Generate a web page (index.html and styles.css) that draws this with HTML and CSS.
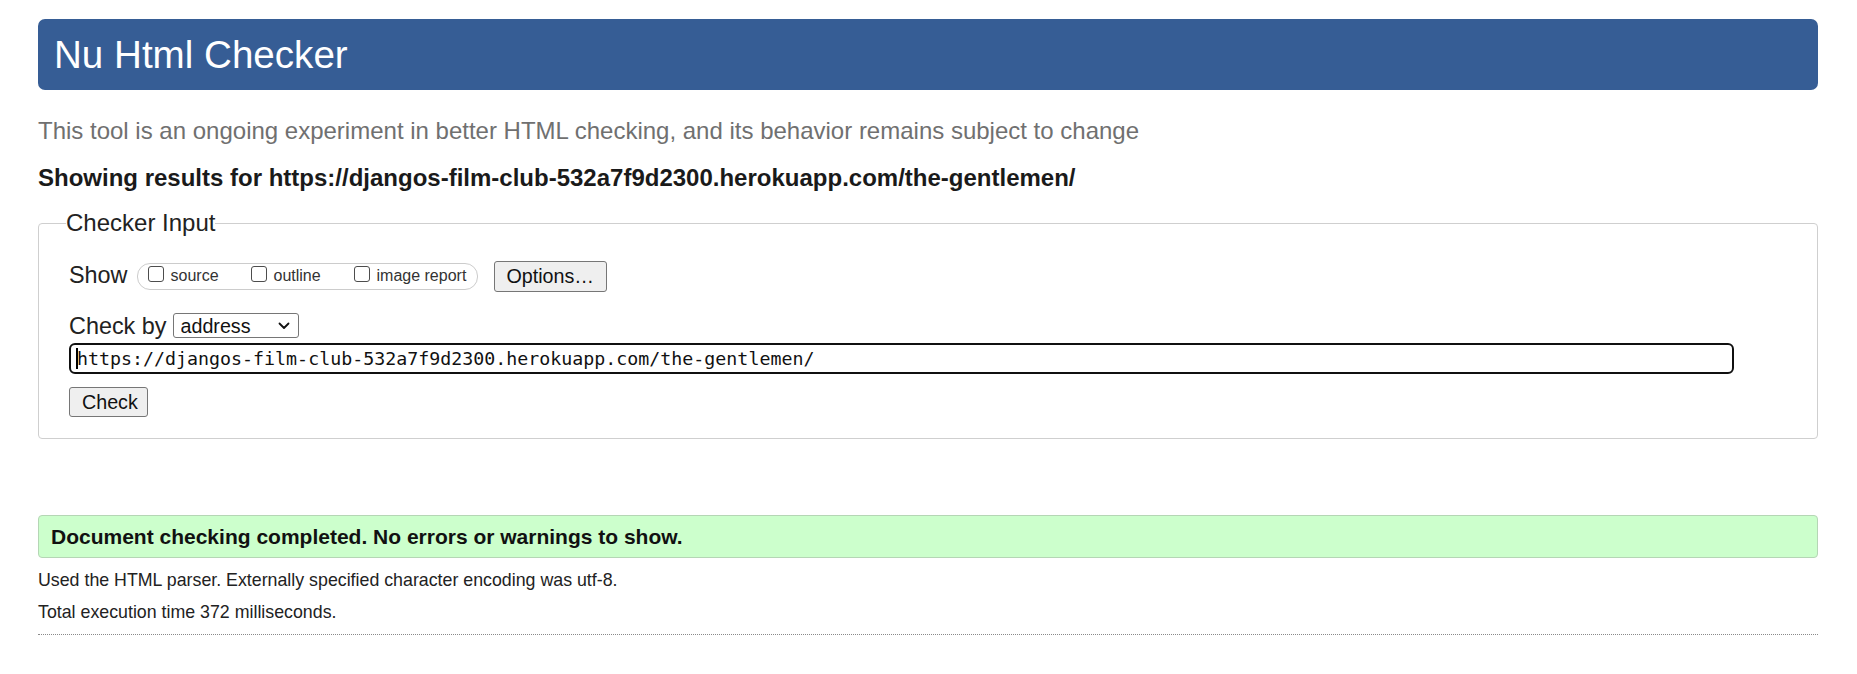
FILE: index.html
```html
<!DOCTYPE html>
<html lang="en">
<head>
<meta charset="utf-8">
<title>Showing results for https://djangos-film-club-532a7f9d2300.herokuapp.com/the-gentlemen/ - Nu Html Checker</title>
<link rel="stylesheet" href="styles.css">
</head>
<body>
<div class="page">
  <h1 class="title">Nu Html Checker</h1>
  <p class="intro">This tool is an ongoing experiment in better HTML checking, and its behavior remains subject to change</p>
  <p class="showing">Showing results for https://djangos-film-club-532a7f9d2300.herokuapp.com/the-gentlemen/</p>

  <form class="checker-form">
    <fieldset class="checker">
      <legend class="checker-legend">Checker Input</legend>
      <div class="row show-row">
        <span class="row-label">Show</span>
        <span class="show-group">
          <label class="opt"><input type="checkbox" class="cb"><span>source</span></label>
          <label class="opt"><input type="checkbox" class="cb"><span>outline</span></label>
          <label class="opt"><input type="checkbox" class="cb"><span>image report</span></label>
        </span>
        <button type="button" class="btn options-btn">Options…</button>
      </div>
      <div class="row by-row">
        <span class="row-label">Check by</span>
        <span class="select-wrap">
          <select class="by-select">
            <option>address</option>
            <option>file upload</option>
            <option>text input</option>
          </select>
          <svg class="chev" width="12" height="8" viewBox="0 0 12 8" aria-hidden="true"><path d="M1.5 1.5 L6 6 L10.5 1.5" fill="none" stroke="#111" stroke-width="1.8" stroke-linecap="round" stroke-linejoin="round"/></svg>
        </span>
      </div>
      <div class="url-wrap">
        <input class="url" type="url" value="https://djangos-film-club-532a7f9d2300.herokuapp.com/the-gentlemen/">
        <span class="caret"></span>
      </div>
      <div class="row submit-row">
        <button type="button" class="btn check-btn">Check</button>
      </div>
    </fieldset>
  </form>

  <div class="success">Document checking completed. No errors or warnings to show.</div>
  <p class="details">Used the HTML parser. Externally specified character encoding was utf-8.</p>
  <p class="details">Total execution time 372 milliseconds.</p>
  <div class="rule"></div>
</div>
</body>
</html>
```

FILE: styles.css
```css
html, body {
  margin: 0;
  padding: 0;
  background: #ffffff;
}

body {
  font-family: "Liberation Sans", Arial, sans-serif;
  color: #222222;
}

.page {
  padding: 19px 39px 0 38px;
}

.title {
  margin: 0;
  height: 71px;
  line-height: 71px;
  padding: 0 16px;
  background: #365d95;
  color: #ffffff;
  font-weight: normal;
  font-size: 38.6px;
  border-radius: 7px;
}

.intro {
  margin: 27px 0 0;
  font-size: 24px;
  line-height: 27px;
  color: #707070;
}

.showing {
  margin: 20px 0 0;
  font-size: 24px;
  line-height: 27px;
  font-weight: bold;
  color: #1a1a1a;
}

.checker-form {
  margin: 18px 0 0;
}

.checker {
  margin: 0;
  padding: 0 30px 21px 30px;
  border: 1px solid #cfcfcf;
  border-radius: 4px;
  min-width: 0;
}

.checker-legend {
  padding: 0;
  margin-left: -3px;
  font-size: 24px;
  line-height: 28px;
  color: #222222;
}

.row {
  display: flex;
  align-items: center;
}

.row-label {
  font-size: 23.4px;
  line-height: 28px;
  color: #222222;
}

.show-row {
  margin-top: 23px;
  height: 32px;
}

.show-row .row-label {
  margin-top: -3px;
}

.show-group {
  display: inline-flex;
  align-items: center;
  margin-left: 9px;
  height: 25px;
  width: 319px;
  padding: 0 10px;
  border: 1px solid #cccccc;
  border-radius: 13px;
}

.opt {
  display: inline-flex;
  align-items: center;
  width: 103px;
  flex: none;
  font-size: 16px;
  color: #333333;
  white-space: nowrap;
}

.opt:last-child {
  width: auto;
}

.cb {
  appearance: none;
  -webkit-appearance: none;
  box-sizing: border-box;
  width: 16px;
  height: 16px;
  margin: -5px 7px 0 0;
  border: 1px solid #4d4d4d;
  border-radius: 3px;
  background: #ffffff;
}

.btn {
  font-family: "Liberation Sans", Arial, sans-serif;
  font-size: 19.7px;
  color: #111111;
  background: #efefef;
  border: 1px solid #767676;
  border-radius: 3px;
  padding: 0 12px;
}

.options-btn {
  margin-left: 16px;
  height: 31px;
}

.by-row {
  margin-top: 21px;
  height: 25px;
}

.select-wrap {
  position: relative;
  display: inline-block;
  margin-left: 6px;
  height: 25px;
}

.by-select {
  appearance: none;
  -webkit-appearance: none;
  display: block;
  box-sizing: border-box;
  height: 25px;
  width: 126px;
  font-family: "Liberation Sans", Arial, sans-serif;
  font-size: 19.7px;
  color: #111111;
  background: #ffffff;
  border: 1px solid #767676;
  border-radius: 3px;
  padding: 0 4px 0 7px;
}

.chev {
  position: absolute;
  right: 9px;
  top: 9px;
  pointer-events: none;
}

.url-wrap {
  position: relative;
  margin-top: 5px;
  width: calc(100% - 53px);
}

.url {
  display: block;
  box-sizing: border-box;
  width: 100%;
  height: 31px;
  padding: 0 5px 0 6px;
  border: 2px solid #101010;
  border-radius: 6px;
  font-family: "DejaVu Sans Mono", "Liberation Mono", monospace;
  font-size: 18.3px;
  color: #111111;
  outline: none;
}

.caret {
  position: absolute;
  left: 7px;
  top: 5px;
  width: 2px;
  height: 21px;
  background: #000000;
}

.submit-row {
  margin-top: 13px;
}

.check-btn {
  height: 30px;
  width: 79px;
}

.success {
  margin-top: 76px;
  height: 41px;
  line-height: 41px;
  padding: 0 12px;
  background: #ccffcc;
  border: 1px solid #b5d6b5;
  border-radius: 4px;
  font-weight: bold;
  font-size: 21px;
  color: #111111;
}

.details {
  margin: 0;
  font-size: 17.8px;
  line-height: 32px;
  color: #222222;
}

.success + .details {
  margin-top: 6px;
}

.rule {
  margin-top: 6px;
  border-top: 1px dotted #8a8a8a;
}
```
